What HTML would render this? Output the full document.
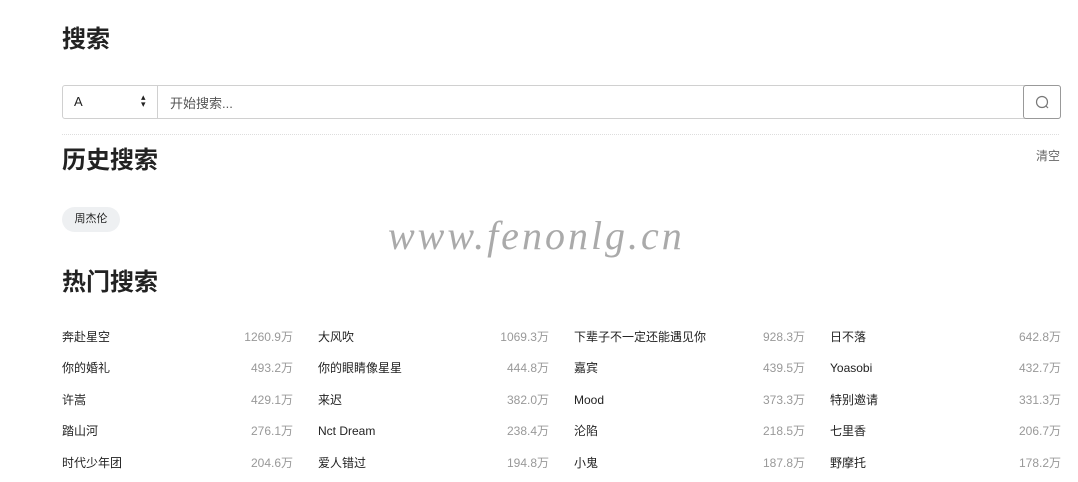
<!DOCTYPE html>
<html><head><meta charset="utf-8"><style>
body{margin:0;width:1078px;height:482px;background:#fff;font-family:"Liberation Sans","Noto Sans CJK SC",sans-serif;color:#222;position:relative;overflow:hidden}
.a{position:absolute}
h2{margin:0;font-size:24px;font-weight:bold;position:absolute;left:62px;color:#222;line-height:30px}
.box{left:62px;top:85px;width:997px;height:32px;border:1px solid #d0d0d0;border-radius:3px}
.sel{left:62px;top:85px;width:95px;height:34px;border-right:1px solid #d0d0d0}
.btn{left:1023px;top:85px;width:36px;height:32px;border:1px solid #999;border-radius:3px;background:#fff}
.row{position:absolute;width:231px;font-size:12px;height:16px;line-height:16px}
.row span{position:absolute;right:0;top:0;color:#999}
</style></head><body>
<h2 style="top:25px">搜索</h2>
<div class="a box"></div>
<div class="a sel"></div>
<div class="a" style="left:74px;top:94px;font-size:13px">A</div>
<div class="a" style="left:141px;top:94px;font-size:9px;line-height:7px">▴<br>▾</div>
<div class="a" style="left:170px;top:93px;font-size:13px;color:#555">开始搜索...</div>
<div class="a btn"><svg width="36" height="32"><circle cx="18" cy="16" r="5.5" fill="none" stroke="#777" stroke-width="1.2"/><line x1="22" y1="20" x2="24" y2="22" stroke="#777" stroke-width="1.2"/></svg></div>
<div class="a" style="left:62px;top:134px;width:997px;border-top:1px dotted #ddd"></div>
<h2 style="top:146px">历史搜索</h2>
<div class="a" style="left:1036px;top:147px;font-size:12px;color:#666">清空</div>
<div class="a" style="left:62px;top:207px;width:58px;height:25px;border-radius:13px;background:#eef0f2;font-size:11px;line-height:25px;text-align:center">周杰伦</div>
<div class="a" style="left:388px;top:212px;font-size:40px;font-family:'Liberation Serif',serif;font-style:italic;color:#aaa;letter-spacing:3px">www.fenonlg.cn</div>
<h2 style="top:268px">热门搜索</h2>
<div class="row" style="left:62px;top:329px">奔赴星空<span>1260.9万</span></div>
<div class="row" style="left:318px;top:329px">大风吹<span>1069.3万</span></div>
<div class="row" style="left:574px;top:329px">下辈子不一定还能遇见你<span>928.3万</span></div>
<div class="row" style="left:830px;top:329px">日不落<span>642.8万</span></div>
<div class="row" style="left:62px;top:360px">你的婚礼<span>493.2万</span></div>
<div class="row" style="left:318px;top:360px">你的眼睛像星星<span>444.8万</span></div>
<div class="row" style="left:574px;top:360px">嘉宾<span>439.5万</span></div>
<div class="row" style="left:830px;top:360px">Yoasobi<span>432.7万</span></div>
<div class="row" style="left:62px;top:392px">许嵩<span>429.1万</span></div>
<div class="row" style="left:318px;top:392px">来迟<span>382.0万</span></div>
<div class="row" style="left:574px;top:392px">Mood<span>373.3万</span></div>
<div class="row" style="left:830px;top:392px">特别邀请<span>331.3万</span></div>
<div class="row" style="left:62px;top:423px">踏山河<span>276.1万</span></div>
<div class="row" style="left:318px;top:423px">Nct Dream<span>238.4万</span></div>
<div class="row" style="left:574px;top:423px">沦陷<span>218.5万</span></div>
<div class="row" style="left:830px;top:423px">七里香<span>206.7万</span></div>
<div class="row" style="left:62px;top:455px">时代少年团<span>204.6万</span></div>
<div class="row" style="left:318px;top:455px">爱人错过<span>194.8万</span></div>
<div class="row" style="left:574px;top:455px">小鬼<span>187.8万</span></div>
<div class="row" style="left:830px;top:455px">野摩托<span>178.2万</span></div>
</body></html>
